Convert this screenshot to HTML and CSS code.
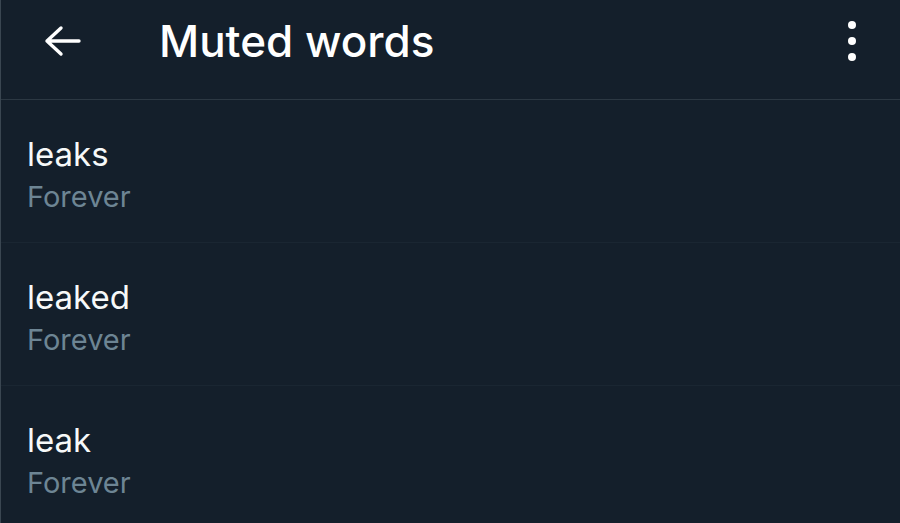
FILE: index.html
```html
<!DOCTYPE html>
<html lang="en">
  <head>
    <meta charset="UTF-8" />
    <meta name="viewport" content="width=device-width, initial-scale=1.0" />
    <title>Muted words</title>
    <link rel="stylesheet" href="styles.css">
  </head>
  <body>
    <div class="screen">
      <div class="topbar">
        <button class="icon-btn back">
          <svg width="38" height="32" viewBox="0 0 38 32">
            <path d="M18 3 L4 16 L18 29 M4 16 H36" fill="none" stroke="#fff" stroke-width="3.4" stroke-linecap="round" stroke-linejoin="round" />
          </svg>
        </button>
        <h1 class="title">Muted words</h1>
        <button class="icon-btn more">
          <span class="dot"></span>
          <span class="dot"></span>
          <span class="dot"></span>
        </button>
      </div>
      <div class="list">
        <div class="item">
          <div class="word">leaks</div>
          <div class="duration">Forever</div>
        </div>
        <div class="item">
          <div class="word">leaked</div>
          <div class="duration">Forever</div>
        </div>
        <div class="item">
          <div class="word">leak</div>
          <div class="duration">Forever</div>
        </div>
      </div>
    </div>
  </body>
</html>
```

FILE: styles.css
```css
* {
  margin: 0;
  padding: 0;
  box-sizing: border-box;
}
body {
  background-color: #141f2b;
  font-family: "Inter", "Liberation Sans", sans-serif;
  color: #f7f9f9;
}
.screen {
  width: 900px;
  height: 523px;
  overflow: hidden;
  border-left: 1px solid #3a4651;
}
.topbar {
  height: 100px;
  display: flex;
  align-items: center;
  padding: 0 44px 18px 42px;
  border-bottom: 1px solid #2c3843;
}
.icon-btn {
  background: none;
  border: none;
  cursor: pointer;
}
.back {
  width: 38px;
  display: flex;
}
.title {
  margin-left: 78px;
  font-size: 44px;
  font-weight: 500;
  color: #ffffff;
  flex: 1;
}
.more {
  display: flex;
  flex-direction: column;
  gap: 8px;
  align-items: center;
}
.dot {
  width: 8px;
  height: 8px;
  border-radius: 50%;
  background-color: #fff;
}
.item {
  height: 143px;
  padding: 32px 26px 0;
  border-bottom: 1px solid #1a2632;
}
.word {
  font-size: 33px;
  line-height: 44px;
  color: #f7f9f9;
}
.duration {
  font-size: 29px;
  line-height: 42px;
  color: #6d8594;
}
```
